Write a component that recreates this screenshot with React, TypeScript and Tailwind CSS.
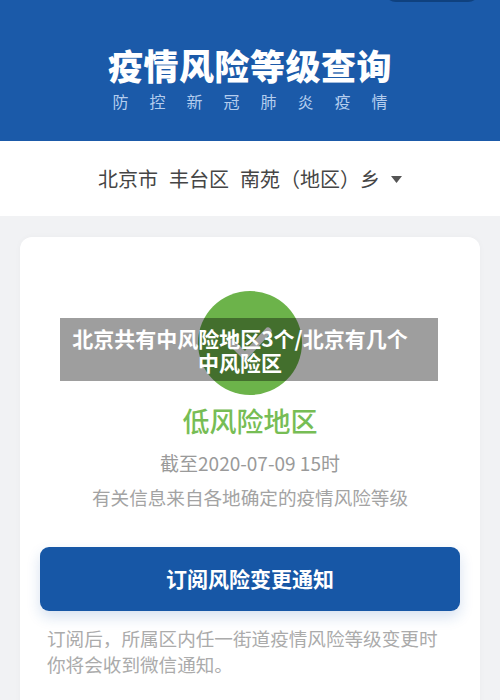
import React from "react";

const cjk = { fontFamily: '"Noto Sans CJK SC", "Noto Sans", sans-serif' };

export default function App() {
  return (
    <div className="relative w-[500px] h-[700px] overflow-hidden bg-[#f1f2f4]" style={cjk}>
      {/* header */}
      <header className="relative h-[141px] bg-[#1b5aa9] flex flex-col items-center pt-[44px]">
        <div className="absolute right-[20px] top-[-22px] w-[96px] h-[24px] rounded-full border-2 border-[#0f417f] bg-[#1a54a0]" />
        <h1 className="text-[35px] leading-[42px] font-black text-white tracking-[0.5px]">疫情风险等级查询</h1>
        <p className="mt-[5px] text-[16px] leading-[20px] text-[#b4cdee] tracking-[21px] pl-[21px]">防控新冠肺炎疫情</p>
      </header>

      {/* location selector */}
      <div className="h-[75px] bg-white flex items-center justify-center text-[20px] text-[#454545]">
        <div className="flex items-center gap-[11px]">
          <span>北京市</span>
          <span>丰台区</span>
          <span>南苑（地区）乡</span>
        </div>
        <svg width="11" height="7" viewBox="0 0 11 7" className="ml-[11px] mt-[1px]">
          <path d="M0 0 L11 0 L5.5 7 Z" fill="#555" />
        </svg>
      </div>

      {/* result card */}
      <div className="px-[20px] pt-[21px]">
        <div className="bg-white rounded-[12px] h-[500px] flex flex-col items-center pt-[54px] shadow-[0_0_6px_rgba(0,0,0,0.03)]">
          <div className="w-[104px] h-[104px] rounded-full bg-[#6cb34a] flex items-center justify-center">
            <svg width="48" height="40" viewBox="0 0 48 40">
              <path d="M6 20 L19 33 L42 8" fill="none" stroke="#ffffff" strokeWidth="7" strokeLinecap="round" strokeLinejoin="round" />
            </svg>
          </div>
          <div className="mt-[9px] text-[27px] leading-[34px] text-[#77bd55] font-medium">低风险地区</div>
          <div className="mt-[13px] text-[19px] leading-[24px] text-[#9a9a9a]">截至2020-07-09 15时</div>
          <div className="mt-[10px] text-[18.6px] leading-[24px] text-[#a3a3a3]">有关信息来自各地确定的疫情风险等级</div>
          <button className="mt-[38px] w-[420px] h-[64px] rounded-[9px] bg-[#1757a6] text-white text-[21px] font-bold shadow-[0_6px_14px_rgba(30,90,170,0.18)]">
            订阅风险变更通知
          </button>
          <p className="mt-[14px] w-[420px] text-[18.6px] leading-[26px] text-[#ababab] pl-[7px]">
            订阅后，所属区内任一街道疫情风险等级变更时
            <br />
            你将会收到微信通知。
          </p>
        </div>
      </div>

      {/* caption overlay */}
      <div className="absolute left-[60px] top-[318px] w-[378px] h-[63px] bg-[rgba(0,0,0,0.38)] flex items-center justify-center pr-[18px]">
        <p className="text-white text-[21px] leading-[24px] font-bold text-center">
          北京共有中风险地区3个/北京有几个
          <br />
          中风险区
        </p>
      </div>
    </div>
  );
}
